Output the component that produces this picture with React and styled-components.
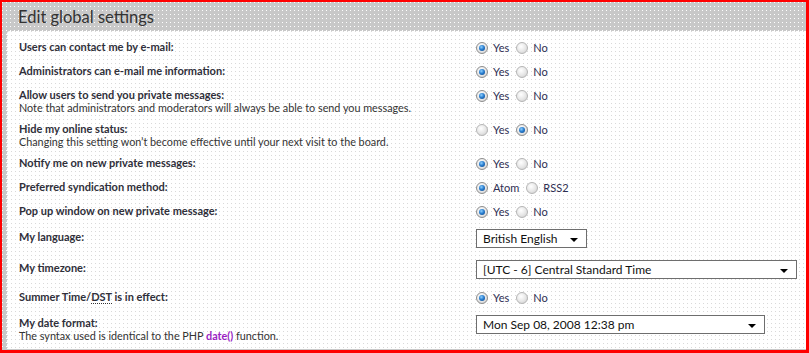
import React from "react";
import styled, { createGlobalStyle } from "styled-components";

const GlobalStyle = createGlobalStyle`
  html, body {
    margin: 0;
    padding: 0;
    background: #ffffff;
  }
  * {
    box-sizing: border-box;
  }
`;

const dots = (dot, size = 4) =>
  `conic-gradient(from 0deg at 1px 1px, transparent 270deg, ${dot} 270deg) 0 0 / ${size}px ${size}px`;

const settings = [
  { label: "Users can contact me by e-mail:", type: "radio", options: ["Yes", "No"], value: 0 },
  { label: "Administrators can e-mail me information:", type: "radio", options: ["Yes", "No"], value: 0 },
  {
    label: "Allow users to send you private messages:",
    note: "Note that administrators and moderators will always be able to send you messages.",
    type: "radio",
    options: ["Yes", "No"],
    value: 0,
  },
  {
    label: "Hide my online status:",
    note: "Changing this setting won\u2019t become effective until your next visit to the board.",
    type: "radio",
    options: ["Yes", "No"],
    value: 1,
  },
  { label: "Notify me on new private messages:", type: "radio", options: ["Yes", "No"], value: 0 },
  { label: "Preferred syndication method:", type: "radio", options: ["Atom", "RSS2"], value: 0 },
  { label: "Pop up window on new private message:", type: "radio", options: ["Yes", "No"], value: 0 },
  { label: "My language:", type: "select", text: "British English", width: 111 },
  { label: "My timezone:", type: "select", text: "[UTC - 6] Central Standard Time", width: 321 },
  { label: "dst", type: "radio", options: ["Yes", "No"], value: 0 },
  { label: "My date format:", note: "date", type: "select", text: "Mon Sep 08, 2008 12:38 pm", width: 289 },
];

const App = () => {
  return (
    <>
      <GlobalStyle />
      <Frame>
        <Header>
          <Title>Edit global settings</Title>
        </Header>
        <Panel>
          {settings.map((s, i) => (
            <Row key={i} $select={s.type === "select"}>
              <Label>
                <strong>
                  {s.label === "dst" ? (
                    <>
                      Summer Time/<Abbr>DST</Abbr> is in effect:
                    </>
                  ) : (
                    s.label
                  )}
                </strong>
                {s.note === "date" ? (
                  <Note>
                    The syntax used is identical to the PHP <Link>date()</Link> function.
                  </Note>
                ) : (
                  s.note && <Note>{s.note}</Note>
                )}
              </Label>
              <Control>
                {s.type === "radio" ? (
                  s.options.map((opt, j) => (
                    <Option key={opt}>
                      <Radio $checked={s.value === j} />
                      {opt}
                    </Option>
                  ))
                ) : (
                  <Select style={{ width: s.width }}>
                    <span>{s.text}</span>
                    <Arrow />
                  </Select>
                )}
              </Control>
            </Row>
          ))}
        </Panel>
      </Frame>
    </>
  );
};

const Frame = styled.div`
  height: 353px;
  width: 809px;
  display: flex;
  flex-direction: column;
  border-style: solid;
  border-color: #ff0000;
  border-width: 2px 3px 3px 2px;
  background: ${dots("#ffffff")}, #c8c8c8;
  font-family: Lato, "Liberation Sans", sans-serif;
  color: #333333;
`;

const Header = styled.div`
  height: 29px;
  display: flex;
  align-items: center;
  padding-left: 16px;
  flex-shrink: 0;
`;

const Title = styled.h1`
  margin: 0;
  font-size: 16.5px;
  font-weight: 400;
  color: #333333;
`;

const Panel = styled.div`
  flex: 1;
  margin: 0 0 1px 5px;
  padding-top: 4px;
  border-top-left-radius: 3px;
  background: ${dots("#d9d9d9")}, #ffffff;
`;

const Row = styled.div`
  display: grid;
  grid-template-columns: 457px 1fr;
  align-items: start;
  padding: ${(p) => (p.$select ? "6px 0 6px 12px" : "4px 0 3px 12px")};
`;

const Label = styled.div`
  padding-top: 1px;
  font-size: 11px;
  line-height: 13px;
  color: #333333;

  strong {
    font-weight: 700;
    color: #2f2f3a;
  }
`;

const Note = styled.div`
  font-size: 10.8px;
`;

const Abbr = styled.span`
  border-bottom: 1px dotted #333333;
`;

const Link = styled.span`
  color: #9a1fc4;
  font-weight: 700;
`;

const Control = styled.div`
  display: flex;
  align-items: center;
  min-height: 17px;
`;

const Option = styled.label`
  display: flex;
  align-items: center;
  gap: 5px;
  margin-right: 7px;
  font-size: 11px;
  color: #2e2e52;
`;

const Radio = styled.span`
  position: relative;
  width: 12px;
  height: 12px;
  border-radius: 50%;
  border: 1px solid ${(p) => (p.$checked ? "#8d8d8d" : "#b5b5b5")};
  background: radial-gradient(circle at 40% 35%, #ffffff 0%, #e6e6e6 55%, #c9c9c9 100%);

  &::after {
    content: "";
    display: ${(p) => (p.$checked ? "block" : "none")};
    position: absolute;
    left: 2px;
    top: 2px;
    width: 6px;
    height: 6px;
    border-radius: 50%;
    background: radial-gradient(circle at 40% 35%, #8fd0ff 0%, #2a7fd0 45%, #0b3f82 100%);
  }
`;

const Select = styled.div`
  height: 19px;
  display: flex;
  align-items: center;
  justify-content: space-between;
  padding: 0 8px 0 6px;
  border: 1px solid #6e6e6e;
  background: #ffffff;
  font-size: 12px;
  color: #111111;
`;

const Arrow = styled.span`
  width: 0;
  height: 0;
  margin-top: 2px;
  border-left: 4px solid transparent;
  border-right: 4px solid transparent;
  border-top: 4px solid #000000;
`;

export default App;
